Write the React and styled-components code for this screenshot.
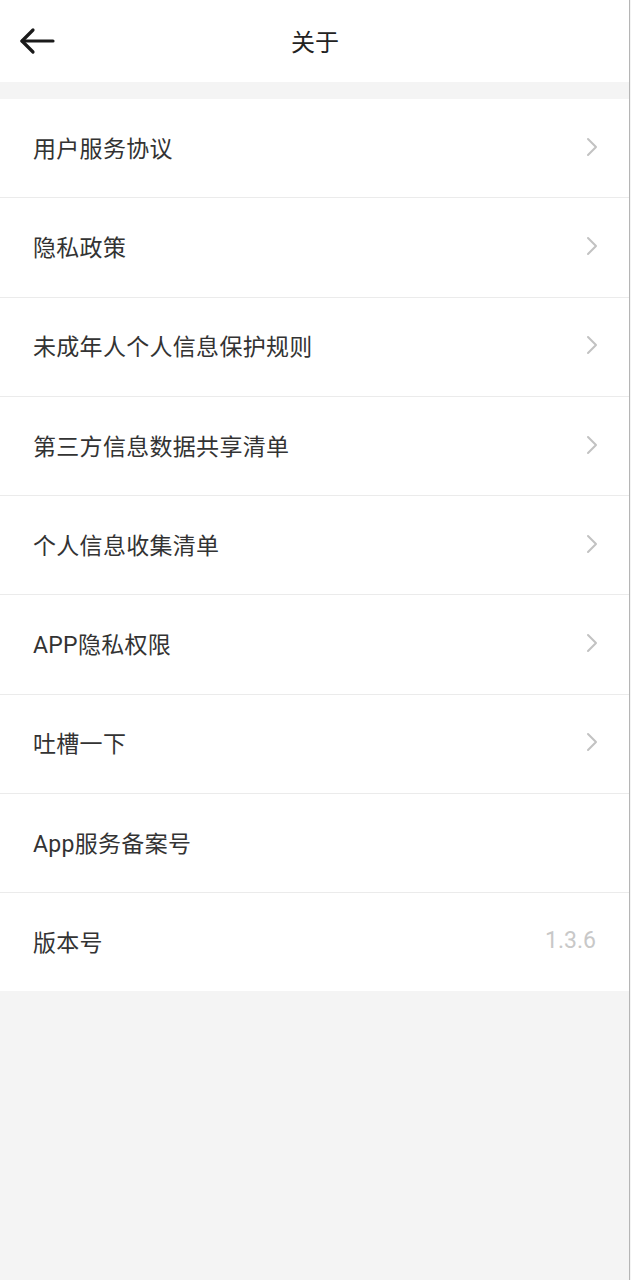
import React from "react";
import styled, { createGlobalStyle } from "styled-components";

const Global = createGlobalStyle`
  html, body { margin: 0; padding: 0; background: #f4f4f4; }
  body { font-family: Roboto, "Noto Sans CJK SC", sans-serif; }
`;

const Page = styled.div`
  width: 629px;
  min-height: 1280px;
  background: #f4f4f4;
  border-right: 1px solid #b5b5b5;
`;

const Header = styled.header`
  height: 82px;
  background: #fff;
  display: grid;
  grid-template-columns: 80px 1fr 80px;
  align-items: center;
`;

const BackButton = styled.button`
  border: 0;
  background: none;
  padding: 0 0 0 19px;
  display: flex;
  align-items: center;
  height: 82px;
  cursor: pointer;
`;

const Title = styled.h1`
  margin: 0 0 2px;
  text-align: center;
  font-size: 24px;
  font-weight: 400;
  color: #222;
  padding-left: 1px;
`;

const List = styled.ul`
  list-style: none;
  margin: 17px 0 0;
  padding: 0;
  background: #fff;
`;

const Row = styled.li`
  height: ${(p) => (p.$last ? "95px" : "95.3px")};
  display: flex;
  align-items: center;
  justify-content: space-between;
  padding: 0 31px 3px 33px;
  border-bottom: ${(p) => (p.$last ? "0" : "1px solid #ebebeb")};
`;

const Label = styled.span`
  font-size: 23px;
  color: #333;
  letter-spacing: 0.3px;
`;

const Value = styled.span`
  font-size: 23px;
  color: #c8c8c8;
  padding-right: 2px;
`;

const Arrow = () => (
  <svg width="36" height="28" viewBox="0 0 36 28" fill="none">
    <path d="M3 14H34" stroke="#1a1a1a" strokeWidth="3.2" strokeLinecap="round" />
    <path d="M14 3L3 14L14 25" stroke="#1a1a1a" strokeWidth="3.2" strokeLinecap="round" strokeLinejoin="round" />
  </svg>
);

const Chevron = () => (
  <svg width="12" height="20" viewBox="0 0 12 20" fill="none">
    <path d="M2 2L10 10L2 18" stroke="#c2c2c2" strokeWidth="2" strokeLinecap="round" strokeLinejoin="round" />
  </svg>
);

const items = [
  { label: "用户服务协议", arrow: true },
  { label: "隐私政策", arrow: true },
  { label: "未成年人个人信息保护规则", arrow: true },
  { label: "第三方信息数据共享清单", arrow: true },
  { label: "个人信息收集清单", arrow: true },
  { label: "APP隐私权限", arrow: true },
  { label: "吐槽一下", arrow: true },
  { label: "App服务备案号" },
  { label: "版本号", value: "1.3.6" },
];

export default function App() {
  return (
    <>
      <Global />
      <Page>
        <Header>
          <BackButton aria-label="返回">
            <Arrow />
          </BackButton>
          <Title>关于</Title>
          <span />
        </Header>
        <List>
          {items.map((it, i) => (
            <Row key={it.label} $last={i === items.length - 1}>
              <Label>{it.label}</Label>
              {it.arrow && <Chevron />}
              {it.value && <Value>{it.value}</Value>}
            </Row>
          ))}
        </List>
      </Page>
    </>
  );
}
